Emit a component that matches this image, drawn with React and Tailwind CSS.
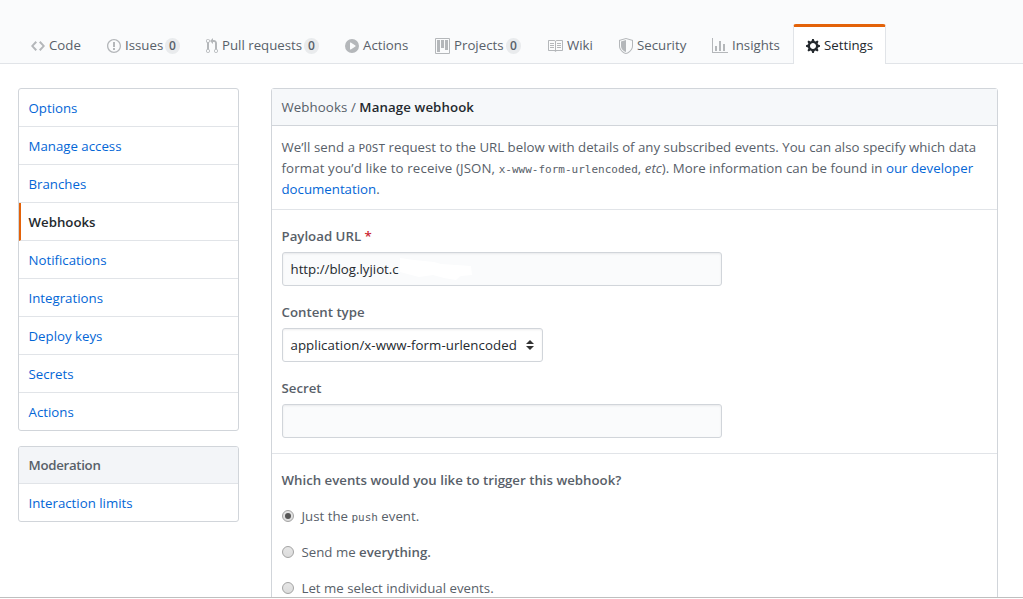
const ICONS = {
  code: [14, 'M9.5 3L8 4.5 11.5 8 8 11.5 9.5 13 14 8 9.5 3zm-5 0L0 8l4.5 5L6 11.5 2.5 8 6 4.5 4.5 3z'],
  issue: [14, 'M7 2.3c3.14 0 5.7 2.56 5.7 5.7s-2.56 5.7-5.7 5.7A5.71 5.71 0 011.3 8c0-3.14 2.56-5.7 5.7-5.7zM7 1C3.14 1 0 4.14 0 8s3.14 7 7 7 7-3.14 7-7-3.14-7-7-7zm1 3H6v5h2V4zm0 6H6v2h2v-2z'],
  pull: [12, 'M11 11.28V5c-.03-.78-.34-1.47-.94-2.06C9.46 2.35 8.78 2.03 8 2H7V0L4 3l3 3V4h1c.27.02.48.11.69.31.21.2.3.42.31.69v6.28A1.993 1.993 0 0010 15a1.993 1.993 0 001-3.72zm-1 2.92c-.66 0-1.2-.55-1.2-1.2 0-.65.55-1.2 1.2-1.2.65 0 1.2.55 1.2 1.2 0 .65-.55 1.2-1.2 1.2zM4 3c0-1.11-.89-2-2-2a1.993 1.993 0 00-1 3.72v6.56A1.993 1.993 0 002 15a1.993 1.993 0 001-3.72V4.72c.59-.34 1-.98 1-1.72zm-.8 10c0 .66-.55 1.2-1.2 1.2-.65 0-1.2-.55-1.2-1.2 0-.65.55-1.2 1.2-1.2.65 0 1.2.55 1.2 1.2zM2 4.2C1.34 4.2.8 3.65.8 3c0-.65.55-1.2 1.2-1.2.65 0 1.2.55 1.2 1.2 0 .65-.55 1.2-1.2 1.2z'],
  play: [14, 'M14 8A7 7 0 110 8a7 7 0 0114 0zm-8.223 3.482l4.599-3.066a.5.5 0 000-.832L5.777 4.518A.5.5 0 005 4.934v6.132a.5.5 0 00.777.416z'],
  project: [15, 'M10 12h3V2h-3v10zm-4-2h3V2H6v8zm-4 4h3V2H2v12zm-1 1h13V1H1v14zM14 0H1a1 1 0 00-1 1v14a1 1 0 001 1h13a1 1 0 001-1V1a1 1 0 00-1-1z'],
  book: [16, 'M3 5h4v1H3V5zm0 3h4V7H3v1zm0 2h4V9H3v1zm11-5h-4v1h4V5zm0 2h-4v1h4V7zm0 2h-4v1h4V9zm2-6v9c0 .55-.45 1-1 1H9.5l-1 1-1-1H2c-.55 0-1-.45-1-1V3c0-.55.45-1 1-1h5.5l1 1 1-1H15c.55 0 1 .45 1 1zm-8 .5L7.5 3H2v9h6V3.5zm7-.5H9.5l-.5.5V12h6V3z'],
  shield: [14, 'M0 2l7-2 7 2v6.02C14 12.69 8.69 16 7 16c-1.69 0-7-3.31-7-7.98V2zm1 .75L7 1l6 1.75v5.268C13 12.104 8.449 15 7 15c-1.449 0-6-2.896-6-6.982V2.75zm1 .75L7 2v12c-1.207 0-5-2.482-5-5.985V3.5z'],
  graph: [16, 'M16 14v1H0V0h1v14h15zM5 13H3V8h2v5zm4 0H7V3h2v10zm4 0h-2V6h2v7z'],
  gear: [14, 'M14 8.77v-1.6l-1.94-.64-.45-1.09.88-1.84-1.13-1.13-1.81.91-1.09-.45-.69-1.92h-1.6l-.63 1.94-1.11.45-1.84-.88-1.13 1.13.91 1.81-.45 1.09L0 7.23v1.59l1.94.64.45 1.09-.88 1.84 1.13 1.13 1.81-.91 1.09.45.69 1.92h1.59l.63-1.94 1.11-.45 1.84.88 1.13-1.13-.92-1.81.47-1.09L14 8.75v.02zM7 11c-1.66 0-3-1.34-3-3s1.34-3 3-3 3 1.34 3 3-1.34 3-3 3z'],
};

function Icon({ name }) {
  const [w, d] = ICONS[name];
  return (
    <svg width={w} height={16} viewBox={`0 0 ${w} 16`} className="mr-1 shrink-0" fill="currentColor">
      <path fillRule="evenodd" d={d} />
    </svg>
  );
}

const TABS = [
  { icon: 'code', label: 'Code', w: 'w-[76px]' },
  { icon: 'issue', label: 'Issues', w: 'w-[99px]', count: 0 },
  { icon: 'pull', label: 'Pull requests', w: 'w-[139px]', count: 0 },
  { icon: 'play', label: 'Actions', w: 'w-[90px]' },
  { icon: 'project', label: 'Projects', w: 'w-[112px]', count: 0 },
  { icon: 'book', label: 'Wiki', w: 'w-[72px]' },
  { icon: 'shield', label: 'Security', w: 'w-[93px]' },
  { icon: 'graph', label: 'Insights', w: 'w-[94px]' },
  { icon: 'gear', label: 'Settings', w: 'w-[93px]', active: true },
];

function Tab({ icon, label, w, count, active }) {
  return (
    <a
      className={`${w} flex h-10 shrink-0 items-center whitespace-nowrap border-x border-t-[3px] px-3 ${
        active
          ? 'rounded-t-[3px] border-x-[#e1e4e8] border-t-[#e36209] bg-white text-[#24292e]'
          : 'border-transparent text-[#586069]'
      }`}
    >
      <span className={`flex ${active ? 'text-[#24292e]' : 'text-[#b4b7ba]'}`}>
        <Icon name={icon} />
      </span>
      <span>{label}</span>
      {count !== undefined && (
        <span className="ml-auto flex h-4 w-[15px] items-center justify-center rounded-full bg-[#e9ebed] text-[12px] font-semibold text-[#586069]">
          {count}
        </span>
      )}
    </a>
  );
}

const MENU = [
  'Options',
  'Manage access',
  'Branches',
  'Webhooks',
  'Notifications',
  'Integrations',
  'Deploy keys',
  'Secrets',
  'Actions',
];

function Sidebar() {
  return (
    <aside className="w-[221px] shrink-0">
      <nav className="overflow-hidden rounded-[3px] border border-[#d1d5da]">
        {MENU.map((label) => (
          <a
            key={label}
            className={`flex h-[38px] items-center border-b border-[#e1e4e8] pt-px last:h-[37px] last:border-b-0 ${
              label === 'Webhooks'
                ? 'border-l-2 border-l-[#e36209] pl-[7.5px] font-semibold text-[#24292e]'
                : 'pl-[9.5px] text-[#0366d6]'
            }`}
          >
            {label}
          </a>
        ))}
      </nav>
      <nav className="mt-[15px] overflow-hidden rounded-[3px] border border-[#d1d5da]">
        <div className="flex h-[37px] items-center border-b border-[#e1e4e8] bg-[#f3f5f8] pl-[9.5px] font-semibold tracking-[-0.3px] text-[#586069]">
          Moderation
        </div>
        <a className="flex h-[37px] items-center pl-[9.5px] pt-px text-[#0366d6]">Interaction limits</a>
      </nav>
    </aside>
  );
}

function Code({ children }) {
  return (
    <code className="font-['DejaVu_Sans_Mono','Liberation_Mono',monospace] text-[11px] tracking-normal">{children}</code>
  );
}

function Radio({ checked, children }) {
  return (
    <label className="mt-[15px] flex h-[21px] items-center">
      <span className="mr-[7.5px] flex h-3 w-3 items-center justify-center rounded-full border border-[#a3a3a3] bg-linear-to-b from-[#e6e6e6] to-[#dcdcdc]">
        {checked && <span className="h-1.5 w-1.5 rounded-full bg-[#555]" />}
      </span>
      <span className="pt-0.5">{children}</span>
    </label>
  );
}

export default function App() {
  return (
    <div className="flex h-[599px] w-[1023px] flex-col overflow-hidden bg-white font-['Open_Sans','Noto_Sans',sans-serif] text-[13.25px] leading-[21px] text-[#586069]">
      <header className="flex h-16 shrink-0 items-end border-b border-[#e1e4e8] bg-[#fafbfc] pl-[18px]">
        <div className="-mb-px flex">
          {TABS.map((tab) => (
            <Tab key={tab.label} {...tab} />
          ))}
        </div>
      </header>
      <main className="flex h-[533px] shrink-0 gap-8 overflow-hidden pl-[18px] pt-6">
        <Sidebar />
        <section className="h-[700px] w-[727px] shrink-0 whitespace-nowrap rounded-[3px] border border-[#d1d5da]">
          <h2 className="flex h-[37px] items-center border-b border-[#d1d5da] bg-[#f6f8fa] pl-[9.5px]">
            <span className="whitespace-pre tracking-[0.09px]">Webhooks / </span>
            <span className="font-semibold tracking-[0.1px] text-[#24292e]">Manage webhook</span>
          </h2>
          <div className="h-[84px] border-b border-[#e1e4e8] pl-[9.5px] pt-[11px]">
            <p className="h-[21px]">
              <span className="tracking-[0.06px]">We’ll send a </span>
              <Code>POST</Code> request to the URL below with details of any subscribed events. You can also specify
              which data
            </p>
            <p className="h-[21px] tracking-[0.03px]">
              <span className="tracking-[0.14px]">format you’d like to receive (JSON, </span>
              <Code>x-www-form-urlencoded</Code>, <em>etc</em>). More information can be found in{' '}
              <a className="text-[#0366d6]">our developer</a>
            </p>
            <p className="h-[21px]">
              <a className="text-[#0366d6]">documentation</a>.
            </p>
          </div>
          <form className="h-[244px] border-b border-[#e1e4e8] pl-2.5 pt-4">
            <div className="-ml-[0.5px] font-semibold">
              Payload URL <span className="text-[#cb2431]">*</span>
            </div>
            <div className="mt-[5px] flex h-[34px] w-[440px] items-center rounded-[3px] border border-[#d1d5da] bg-[#fafbfc] pl-[7.5px] text-[#24292e] shadow-[inset_0_1px_2px_rgba(27,31,35,0.075)]">
              <span>http://blog.lyjiot.c</span>
              <svg width="74" height="26" viewBox="0 0 74 26" fill="#fff">
                <path d="M1 2L15 4 35 6 42 8 72 10 73 19 62 20 57 24 45 22 34 19 20 21 1 16z" />
              </svg>
            </div>
            <div className="-ml-[0.5px] mt-4 font-semibold">Content type</div>
            <div className="mt-[5px] flex h-[34px] w-[261px] items-center justify-between rounded-[3px] border border-[#d1d5da] pl-[7.5px] pr-2 text-[#24292e] shadow-[inset_0_1px_2px_rgba(27,31,35,0.075)]">
              <span className="tracking-[0.07px]">application/x-www-form-urlencoded</span>
              <svg width="8" height="10" viewBox="0 0 8 10" fill="#333">
                <path d="M0 4l4-4 4 4zM0 6l4 4 4-4z" />
              </svg>
            </div>
            <div className="-ml-[0.5px] mt-4 font-semibold">Secret</div>
            <div className="mt-[5px] h-[34px] w-[440px] rounded-[3px] border border-[#d1d5da] bg-[#fafbfc] shadow-[inset_0_1px_2px_rgba(27,31,35,0.075)]" />
          </form>
          <div className="pl-2.5 pt-[15px]">
            <div className="-ml-[0.5px] h-[21px] pt-px font-semibold">
              Which events would you like to trigger this webhook?
            </div>
            <Radio checked>
              Just the <Code>push</Code> event.
            </Radio>
            <Radio>
              Send me <b className="font-semibold">everything.</b>
            </Radio>
            <Radio>Let me select individual events.</Radio>
          </div>
        </section>
      </main>
      <div className="h-px shrink-0 bg-[#bfbfbf]" />
    </div>
  );
}
